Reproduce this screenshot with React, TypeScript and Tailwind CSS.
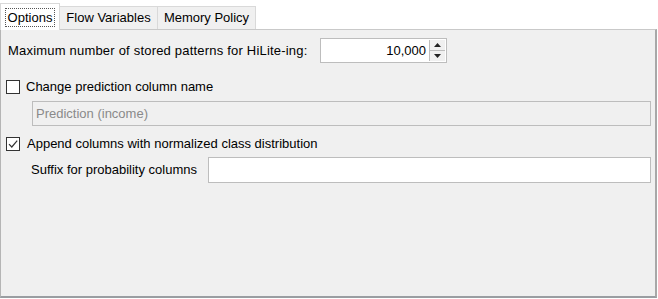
// KNIME-style node dialog: Options tab with HiLite and prediction settings.

import React, { useState } from 'react';

const font = { fontFamily: '"Liberation Sans", Tahoma, Arial, sans-serif' };

const Tab: React.FC<{ label: string; width: string; selected?: boolean }> = ({ label, width, selected }) => (
  <div
    className={
      selected
        ? `${width} h-[27px] pt-[4px] border border-b-0 border-[#d9d9d9] bg-white -mb-px relative z-10 flex justify-center`
        : `${width} h-[23px] mt-[4px] pt-[2px] border border-b-0 border-l-0 border-[#d9d9d9] bg-[#f0f0f0] flex justify-center`
    }
  >
    {selected ? (
      <span className="px-[2px] h-[19px] border border-dotted border-[#555] leading-[17px] inline-block">{label}</span>
    ) : (
      <span className="leading-[17px]">{label}</span>
    )}
  </div>
);

const Checkbox: React.FC<{ checked: boolean; onChange: () => void }> = ({ checked, onChange }) => (
  <button
    onClick={onChange}
    className="w-[14px] h-[14px] border border-[#333] bg-white flex items-center justify-center shrink-0"
  >
    {checked && (
      <svg width="12" height="12" viewBox="0 0 12 12">
        <path d="M2 6.2 L4.8 9 L10.2 2.6" fill="none" stroke="#333" strokeWidth="1.2" />
      </svg>
    )}
  </button>
);

const App: React.FC = () => {
  const [rename, setRename] = useState(false);
  const [append, setAppend] = useState(true);

  return (
    <div className="w-[658px] h-[299px] bg-white text-[13px] text-black" style={font}>
      {/* タブ */}
      <div className="flex h-[29px] items-end">
        <Tab label="Options" width="w-[60px]" selected />
        <Tab label="Flow Variables" width="w-[98px]" />
        <Tab label="Memory Policy" width="w-[98px]" />
      </div>

      {/* パネル */}
      <div className="h-[269px] w-[657px] bg-[#f0f0f0] border border-t-[#c9c9c9] border-l-[#b5b5b5] border-r-2 border-r-[#a8a8a8] border-b-2 border-b-[#9a9ea2] pt-[8px]">
        <div className="flex items-center pl-[7px] h-[25px]">
          <span className="w-[312px] tracking-[0.2px]">Maximum number of stored patterns for HiLite-ing:</span>
          <div className="flex h-[25px] w-[127px] border border-[#bdbdbd] bg-white">
            <div className="flex-1 text-right pr-[3px] leading-[23px]">10,000</div>
            <div className="w-[16px] flex flex-col border-l border-[#bdbdbd] bg-[#f0f0f0] my-[1px] mr-[1px]">
              <div className="flex-1 flex items-center justify-center border-b border-[#bdbdbd]">
                <svg width="7" height="4" viewBox="0 0 7 4"><path d="M0 4 L3.5 0 L7 4 Z" fill="#222" /></svg>
              </div>
              <div className="flex-1 flex items-center justify-center">
                <svg width="7" height="4" viewBox="0 0 7 4"><path d="M0 0 L3.5 4 L7 0 Z" fill="#222" /></svg>
              </div>
            </div>
          </div>
        </div>

        <div className="flex items-center gap-[6px] pl-[5px] mt-[16px] h-[16px]">
          <Checkbox checked={rename} onChange={() => setRename(!rename)} />
          <span>Change prediction column name</span>
        </div>

        <div className="ml-[31px] mr-[4px] mt-[6px] h-[25px] border border-[#bdbdbd] bg-[#f0f0f0] pl-[3px] leading-[23px] text-[#8a8a8a]">
          Prediction (income)
        </div>

        <div className="flex items-center gap-[7px] pl-[5px] mt-[10px] h-[16px]">
          <Checkbox checked={append} onChange={() => setAppend(!append)} />
          <span>Append columns with normalized class distribution</span>
        </div>

        <div className="flex items-center gap-[3px] ml-[30px] mr-[4px] mt-[5px] h-[26px]">
          <span className="w-[174px]">Suffix for probability columns</span>
          <input className="flex-1 h-[26px] border border-[#bdbdbd] bg-white outline-none px-[3px]" />
        </div>
      </div>
    </div>
  );
};

export default App;
